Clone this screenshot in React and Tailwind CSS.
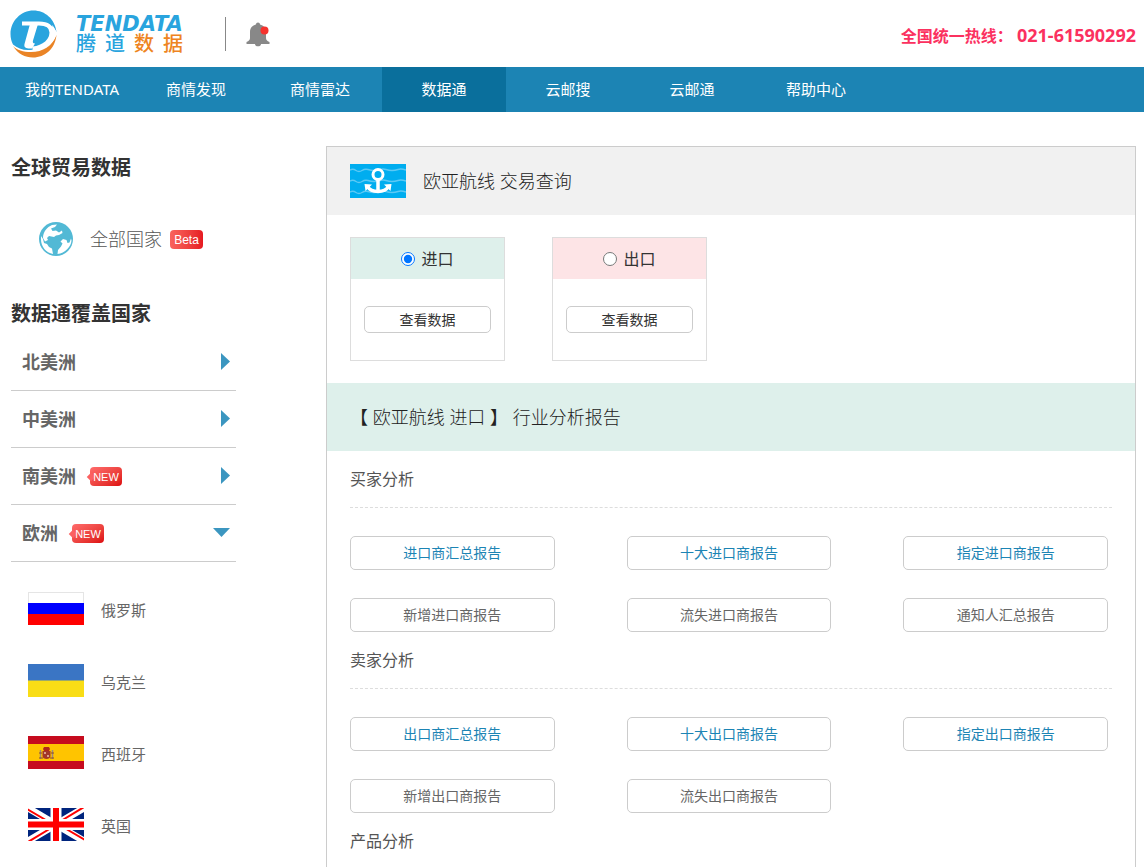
import { useState } from 'react'

const NAV_ITEMS = ['我的TENDATA', '商情发现', '商情雷达', '数据通', '云邮搜', '云邮通', '帮助中心']

const CONTINENTS = [
  { name: '北美洲' },
  { name: '中美洲' },
  { name: '南美洲', isNew: true },
  { name: '欧洲', isNew: true, open: true },
]

const COUNTRIES = [
  { name: '俄罗斯', Flag: RussiaFlag },
  { name: '乌克兰', Flag: UkraineFlag },
  { name: '西班牙', Flag: SpainFlag },
  { name: '英国', Flag: UkFlag },
]

const SECTIONS = [
  {
    title: '买家分析',
    reports: [
      { label: '进口商汇总报告', active: true },
      { label: '十大进口商报告', active: true },
      { label: '指定进口商报告', active: true },
      { label: '新增进口商报告' },
      { label: '流失进口商报告' },
      { label: '通知人汇总报告' },
    ],
  },
  {
    title: '卖家分析',
    reports: [
      { label: '出口商汇总报告', active: true },
      { label: '十大出口商报告', active: true },
      { label: '指定出口商报告', active: true },
      { label: '新增出口商报告' },
      { label: '流失出口商报告' },
    ],
  },
  { title: '产品分析', reports: [] },
]

function LogoMark() {
  return (
    <svg viewBox="0 0 48 48" className="size-12" aria-hidden="true">
      <path d="M3 36C8 44 15 47.500 23 47.500 35 47.500 45 39 46.500 25 42 36 33 42 21 42 13 42 7 40 3 36z" fill="#ea8426" />
      <path
        d="M46.500 22C45 9 35 .5 23.500.5 11 .5.500 11 .5 24c0 4 1 8 2.500 10.500C7 38 12 40 18 40c12 0 22-8 22-18l1-6c2.500 1 4.500 3.500 5.500 6z"
        fill="#29a4de"
      />
      <path
        d="M12 13.500h17c8 0 12.500 3 12.500 9 0 8-7 14.500-19 16"
        fill="none"
        stroke="#fff"
        strokeWidth="4"
      />
      <path d="M20 14h8l-5 16.500c-.5 2 0 3 2 3l-3 5c-5 .5-8.500-.5-7.500-4.500z" fill="#fff" />
      <path d="M42 15c2 2 3.500 4.500 4.500 8-1 6-5 11-9 14 5-6 6.500-14 4.500-22z" fill="#fff" />
    </svg>
  )
}

function BellIcon() {
  return (
    <svg viewBox="0 0 24 26" className="h-[26px] w-6" aria-hidden="true">
      <path
        d="M12 1.500c1.200 0 2 .8 2 2 3.600.9 6 3.500 6 7.500v6c0 1.800 1 3 3.500 4v2h-23v-2C3 20 4 18.800 4 17v-6c0-4 2.400-6.600 6-7.500 0-1.200.8-2 2-2zM9 23h6c0 1.500-1.300 2.300-3 2.300S9 24.500 9 23z"
        fill="#888"
      />
      <circle cx="18.500" cy="9.500" r="4" fill="#f5322d" />
    </svg>
  )
}

function GlobeIcon() {
  return (
    <svg viewBox="0 0 34 34" className="size-[34px]" aria-hidden="true">
      <circle cx="17" cy="17" r="17" fill="#52b9d5" />
      <g fill="#fff">
        <path d="M4 16C4 10 8 5 13 3l5-.5-2 2.500-4 1.500 1.500 2.500 3.500-.5 3 2 3-2 .5 2.500L20 13l-3 .5-2 1.500-5-1-2 2 1 2-3 1.500z" />
        <path d="M2 14l2 3 1 4 3 1 2 3 3 1.500 1 5.500C7 30.500 2 25 2 17z" />
        <path d="M18.500 32l.5-4 3-3.500 1.500-3-2-2 2.500-2.500 3.500 1 1 3 2-.5 1.500-4 .5 2C32 25 26 31 18.500 32z" />
      </g>
    </svg>
  )
}

function RouteIcon() {
  return (
    <svg viewBox="0 0 56 34" className="h-[34px] w-14" aria-hidden="true">
      <rect width="56" height="34" fill="#00adef" />
      <g fill="none" stroke="#5cc9f5" strokeWidth="1.500">
        <path d="M0 6q3-1.500 6 .5t6 0 6-1 6 1 6-1 6 0 6 1 6-1 8 .5" />
        <path d="M0 17q3-1.500 6 .5t6 0 6-1 6 1 6-1 6 0 6 1 6-1 8 .5" />
        <path d="M0 28q3-1.500 6 .5t6 0 6-1 6 1 6-1 6 0 6 1 6-1 8 .5" />
      </g>
      <g fill="none" stroke="#fff">
        <circle cx="28" cy="10.500" r="5" strokeWidth="3" />
        <path d="M28 15v12" strokeWidth="3.500" />
        <path d="M17.500 22.500c2 3.500 6 5 10.500 5s8.500-1.500 10.500-5" strokeWidth="3.500" />
      </g>
      <path d="M14.500 20l7.500.5-6.500 6.500zM41.500 20l-7.500.5 6.500 6.500z" fill="#fff" />
    </svg>
  )
}

function RussiaFlag() {
  return (
    <svg viewBox="0 0 56 33" className="h-[33px] w-14" aria-hidden="true">
      <rect x=".5" y=".5" width="55" height="32" fill="#fff" stroke="#e5e5e5" />
      <path d="M0 11h56v11H0z" fill="#00f" />
      <path d="M0 22h56v11H0z" fill="#f00" />
    </svg>
  )
}

function UkraineFlag() {
  return (
    <svg viewBox="0 0 56 33" className="h-[33px] w-14" aria-hidden="true">
      <path d="M0 0h56v33H0z" fill="#3a75c4" />
      <path d="M0 16.500h56V33H0z" fill="#f9dd16" />
    </svg>
  )
}

function SpainFlag() {
  return (
    <svg viewBox="0 0 56 33" className="h-[33px] w-14" aria-hidden="true">
      <path d="M0 0h56v33H0z" fill="#c60b1e" />
      <path d="M0 8h56v17H0z" fill="#ffc400" />
      <path d="M15 13l1-2h5l1 2-1 2h-5z" fill="#b0281c" />
      <path d="M14.500 15h8v5c0 2-2 3-4 3s-4-1-4-3z" fill="#a3372a" />
      <path d="M16 16h2v2h-2zM19 19h2v2h-2z" fill="#d9a08a" />
      <path d="M12.500 14v9M24.500 14v9" stroke="#9c8a80" strokeWidth="1.500" />
      <path d="M11 22h4M22 22h4M11 17h3M23 17h3" stroke="#8d4a2a" />
    </svg>
  )
}

function UkFlag() {
  return (
    <svg viewBox="0 0 56 33" className="h-[33px] w-14" aria-hidden="true">
      <path d="M0 0h56v33H0z" fill="#00247d" />
      <path d="M0 0l56 33M56 0L0 33" stroke="#fff" strokeWidth="7" />
      <path d="M-1 1l29 17M57 32L28 15M0 34l28-17M56-1L28 16" stroke="#f00" strokeWidth="2" />
      <path d="M28 0v33M0 16.500h56" stroke="#fff" strokeWidth="11" />
      <path d="M28 0v33M0 16.500h56" stroke="#f00" strokeWidth="6" />
    </svg>
  )
}

function NewBadge() {
  return (
    <span className="relative ml-3.5 flex h-[19px] w-8 items-center justify-center rounded-sm bg-linear-to-br from-[#ff6b6b] to-[#dd0008] pt-0.5 font-['Liberation_Sans',sans-serif] text-[11px] leading-none font-normal text-white before:absolute before:-left-0.5 before:size-1.5 before:rotate-45 before:bg-[#fb6161] before:content-['']">
      <span className="relative">NEW</span>
    </span>
  )
}

function Header() {
  return (
    <header className="flex h-[67px] items-center justify-between px-2">
      <div className="flex items-center">
        <a href="#" className="flex items-center pl-0.5" aria-label="TENDATA 腾道数据">
          <LogoMark />
          <span className="ml-[18px] flex w-[107px] flex-col">
            <span className="font-['DejaVu_Sans',sans-serif] text-[21px] leading-5 font-bold text-[#29a4de] italic">
              TENDATA
            </span>
            <span className="flex justify-between text-xl leading-5 font-medium text-[#29a4de]">
              <span>腾</span>
              <span>道</span>
              <span className="text-[#ee8421]">数</span>
              <span className="text-[#ee8421]">据</span>
            </span>
          </span>
        </a>
        <span className="ml-[42px] h-[34px] w-px bg-[#888]" />
        <button type="button" className="ml-5" aria-label="消息">
          <BellIcon />
        </button>
      </div>
      <p className="pt-1 text-base font-bold text-[#fb315f]">
        全国统一热线： <span className="text-lg leading-6">021-61590292</span>
      </p>
    </header>
  )
}

function NavBar() {
  return (
    <nav className="flex bg-[#1c84b4] pl-2.5">
      {NAV_ITEMS.map((item) => (
        <a
          key={item}
          href="#"
          className={`w-[124px] text-center text-[15px] leading-[45px] text-white ${item === '数据通' ? 'bg-[#0a6f9c]' : ''}`}
        >
          {item}
        </a>
      ))}
    </nav>
  )
}

function Sidebar() {
  return (
    <aside className="w-[225px] shrink-0 pt-[41px]">
      <h2 className="text-xl leading-[30px] font-bold text-[#333]">全球贸易数据</h2>
      <a href="#" className="mt-7 mb-8 flex h-14 items-center pl-7 text-lg text-[#555]">
        <GlobeIcon />
        <span className="ml-[17px] font-light">全部国家</span>
        <span className="ml-2 flex h-[19px] w-[33px] items-center justify-center rounded-sm bg-linear-to-r from-[#f9625e] to-[#e61820] pt-0.5 font-['Liberation_Sans',sans-serif] text-xs leading-none text-white">
          Beta
        </span>
      </a>
      <h2 className="text-xl leading-[30px] font-bold text-[#333]">数据通覆盖国家</h2>
      <ul className="mt-[5px]">
        {CONTINENTS.map(({ name, isNew, open }) => (
          <li key={name} className="border-b border-[#ccc]">
            <button
              type="button"
              aria-expanded={!!open}
              className="flex h-14 w-full items-center pr-1.5 pl-[11px] text-lg font-bold text-[#666]"
            >
              {name}
              {isNew && <NewBadge />}
              <svg viewBox="0 0 18 18" className="ml-auto size-[18px]" fill="#3b96c0" aria-hidden="true">
                {open ? <path d="M1 4h17L9.500 13z" /> : <path d="M9 0v17l9-8.500z" />}
              </svg>
            </button>
          </li>
        ))}
      </ul>
      <ul className="pt-2.5">
        {COUNTRIES.map(({ name, Flag }) => (
          <li key={name}>
            <a href="#" className="flex h-[72px] items-center gap-[17px] pl-[17px] text-[15px] text-[#666]">
              <Flag />
              <span className="pt-1">{name}</span>
            </a>
          </li>
        ))}
      </ul>
    </aside>
  )
}

function TradeCard({ label, headClass, checked, onSelect }) {
  return (
    <div className="w-[155px] border border-[#ddd]">
      <label className={`flex h-[41px] items-center justify-center gap-1.5 text-base text-[#333] ${headClass}`}>
        <input type="radio" name="trade" checked={checked} onChange={onSelect} className="size-3.5" />
        {label}
      </label>
      <div className="px-[13px] py-[27px]">
        <button
          type="button"
          className="h-[27px] w-full rounded-[5px] border border-[#ccc] text-sm leading-none text-[#333]"
        >
          查看数据
        </button>
      </div>
    </div>
  )
}

function ReportSection({ title, reports }) {
  return (
    <section className="px-[23px]">
      <h3 className="h-[57px] border-b border-dashed border-[#ddd] text-base leading-[56px] text-[#555]">
        {title}
      </h3>
      <div className="grid grid-cols-3 gap-x-[72px] gap-y-7 pt-7 pr-1">
        {reports.map(({ label, active }) => (
          <button
            key={label}
            type="button"
            className={`h-[34px] rounded-[5px] border border-[#ccc] text-sm ${active ? 'text-[#1c84b4]' : 'text-[#666]'}`}
          >
            {label}
          </button>
        ))}
      </div>
    </section>
  )
}

export default function App() {
  const [trade, setTrade] = useState('进口')

  return (
    <div className="bg-white font-['Noto_Sans','Noto_Sans_CJK_SC',sans-serif] text-[#333]">
      <Header />
      <NavBar />
      <div className="flex items-start gap-[90px] pr-2 pl-[11px]">
        <Sidebar />
        <main className="mt-[34px] min-w-0 flex-1 border border-[#ccc]">
          <div className="flex h-[68px] items-center gap-[17px] bg-[#f1f1f1] px-[23px]">
            <RouteIcon />
            <h1 className="text-lg font-light text-[#222]">欧亚航线 交易查询</h1>
          </div>
          <div className="flex gap-[47px] px-[23px] py-[22px]">
            <TradeCard
              label="进口"
              headClass="bg-[#def0eb]"
              checked={trade === '进口'}
              onSelect={() => setTrade('进口')}
            />
            <TradeCard
              label="出口"
              headClass="bg-[#fde4e6]"
              checked={trade === '出口'}
              onSelect={() => setTrade('出口')}
            />
          </div>
          <h2 className="bg-[#def0eb] px-[23px] text-lg leading-[68px] font-light text-[#222]">
            【 欧亚航线 {trade} 】 行业分析报告
          </h2>
          {SECTIONS.map((section) => (
            <ReportSection key={section.title} {...section} />
          ))}
        </main>
      </div>
    </div>
  )
}
